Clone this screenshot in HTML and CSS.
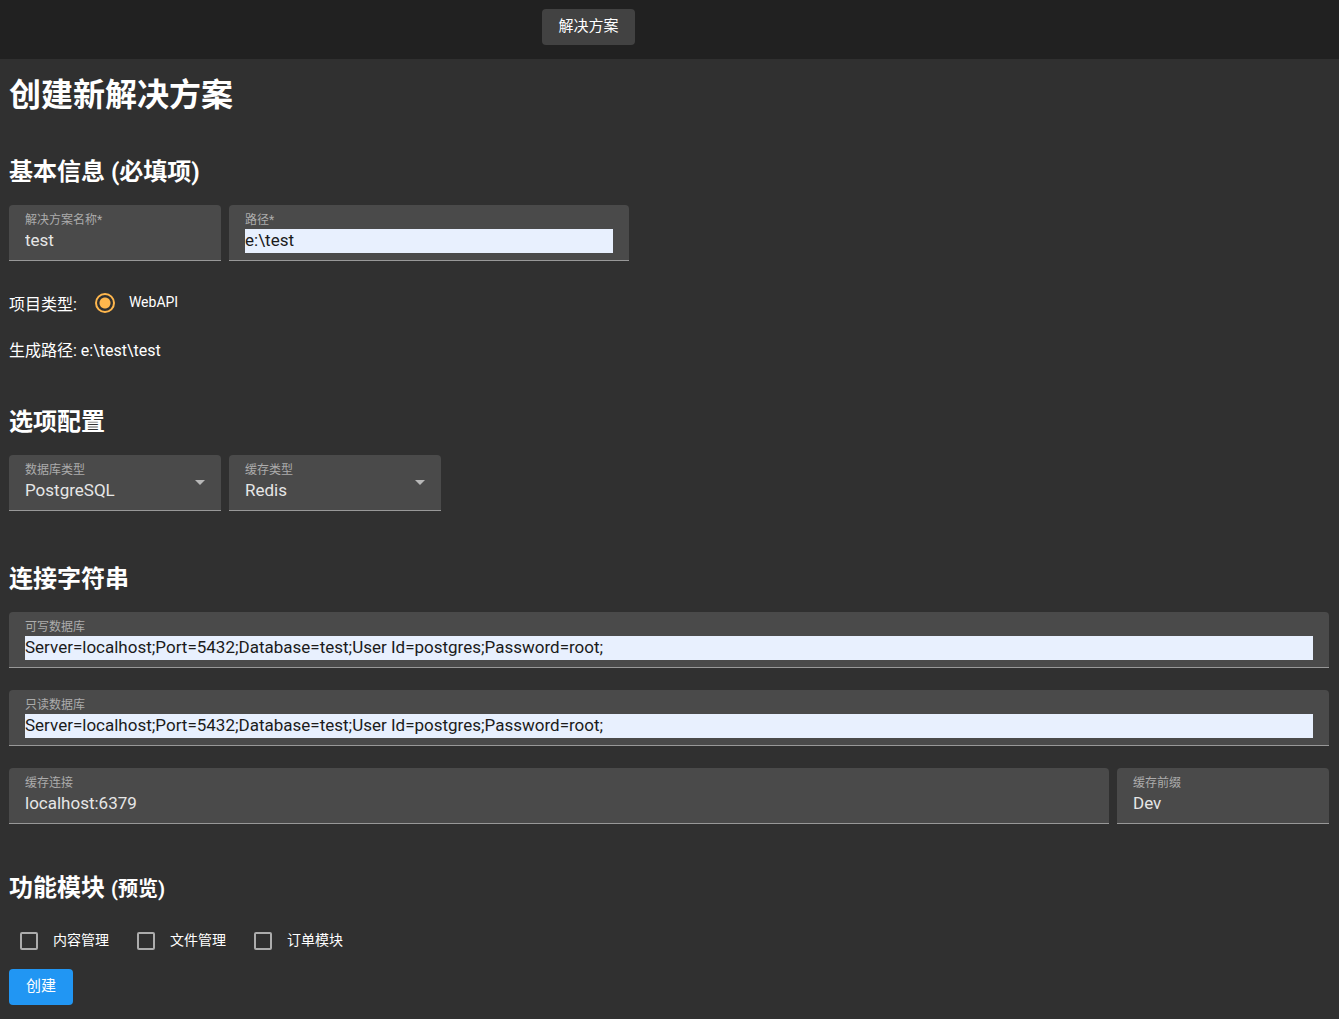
FILE: index.html
```html
<!DOCTYPE html>
<html lang="zh-CN">
<head>
<meta charset="utf-8">
<meta name="viewport" content="width=device-width, initial-scale=1">
<title>创建新解决方案</title>
<link rel="stylesheet" href="styles.css">
</head>
<body>
<header class="toolbar">
  <button type="button" class="btn btn-nav">解决方案</button>
</header>
<main class="page">
  <form class="form">
    <h1 class="title">创建新解决方案</h1>

    <section class="section section-basic">
      <h2 class="heading">基本信息 (必填项)</h2>
      <div class="row">
        <div class="field field-small">
          <label class="field-label" for="name">解决方案名称*</label>
          <input class="field-input" id="name" type="text" value="test">
        </div>
        <div class="field field-medium">
          <label class="field-label" for="path">路径*</label>
          <input class="field-input autofilled" id="path" type="text" value="e:\test">
        </div>
      </div>
      <div class="types" role="radiogroup" aria-labelledby="type-label">
        <span class="types-label" id="type-label">项目类型:</span>
        <input class="radio" id="webapi" type="radio" name="type" checked>
        <label class="option-label" for="webapi">WebAPI</label>
      </div>
      <p class="output">生成路径: e:\test\test</p>
    </section>

    <section class="section section-options">
      <h2 class="heading">选项配置</h2>
      <div class="row">
        <div class="field field-small field-select">
          <label class="field-label" for="database">数据库类型</label>
          <select class="field-input" id="database"><option>PostgreSQL</option></select>
          <svg class="arrow" viewBox="0 0 10 5" aria-hidden="true"><path d="M0 0h10L5 5z"/></svg>
        </div>
        <div class="field field-small field-select">
          <label class="field-label" for="cache">缓存类型</label>
          <select class="field-input" id="cache"><option>Redis</option></select>
          <svg class="arrow" viewBox="0 0 10 5" aria-hidden="true"><path d="M0 0h10L5 5z"/></svg>
        </div>
      </div>
    </section>

    <section class="section section-connections">
      <h2 class="heading">连接字符串</h2>
      <div class="stack">
        <div class="field">
          <label class="field-label" for="write-db">可写数据库</label>
          <input class="field-input autofilled" id="write-db" type="text" value="Server=localhost;Port=5432;Database=test;User Id=postgres;Password=root;">
        </div>
        <div class="field">
          <label class="field-label" for="read-db">只读数据库</label>
          <input class="field-input autofilled" id="read-db" type="text" value="Server=localhost;Port=5432;Database=test;User Id=postgres;Password=root;">
        </div>
        <div class="row">
          <div class="field field-grow">
            <label class="field-label" for="cache-url">缓存连接</label>
            <input class="field-input" id="cache-url" type="text" value="localhost:6379">
          </div>
          <div class="field field-small">
            <label class="field-label" for="cache-prefix">缓存前缀</label>
            <input class="field-input" id="cache-prefix" type="text" value="Dev">
          </div>
        </div>
      </div>
    </section>

    <section class="section">
      <h2 class="heading">功能模块 <small class="note">(预览)</small></h2>
      <div class="modules">
        <label class="module"><input class="checkbox" type="checkbox"><span class="module-name">内容管理</span></label>
        <label class="module"><input class="checkbox" type="checkbox"><span class="module-name">文件管理</span></label>
        <label class="module"><input class="checkbox" type="checkbox"><span class="module-name">订单模块</span></label>
      </div>
    </section>

    <button type="button" class="btn btn-primary">创建</button>
  </form>
</main>
</body>
</html>
```

FILE: styles.css
```css
* {
  box-sizing: border-box;
}

body {
  margin: 0;
  background: #303030;
  color: #fff;
  font-family: Roboto, "Noto Sans CJK SC", sans-serif;
  font-size: 16px;
  line-height: 24px;
}

.toolbar {
  display: flex;
  justify-content: center;
  padding: 9px 162px 14px 0;
  background: #212121;
}

.btn {
  display: block;
  min-width: 64px;
  height: 36px;
  padding: 0 16px 2px;
  border: 0;
  border-radius: 4px;
  color: #fff;
  font-family: inherit;
  font-size: 15px;
  line-height: 34px;
  cursor: pointer;
}

.btn-nav {
  background: #424242;
}

.btn-primary {
  background: #2196f3;
}

.page {
  padding: 16px 10px 14px 9px;
}

.title {
  margin: 0 0 41px;
  font-size: 32px;
  line-height: 40px;
}

.section {
  margin-bottom: 8px;
}

.section-basic {
  margin-bottom: 43px;
}

.section-options {
  margin-bottom: 52px;
}

.section-connections {
  margin-bottom: 48px;
}

.heading {
  margin: 0 0 17px;
  font-size: 24px;
  line-height: 32px;
}

.note {
  font-size: 20px;
  line-height: 24px;
}

.row {
  display: flex;
  gap: 8px;
}

.stack {
  display: flex;
  flex-direction: column;
  gap: 22px;
}

.field {
  display: flex;
  flex-direction: column;
  padding: 6px 16px 7px;
  border-bottom: 1px solid #989898;
  border-radius: 4px 4px 0 0;
  background: #4a4a4a;
}

.field-small {
  flex: 0 1 212px;
}

.field-medium {
  flex: 0 1 400px;
}

.field-grow {
  flex: 1;
}

.field-label {
  color: #acacac;
  font-size: 12px;
  line-height: 18px;
}

.field-input {
  appearance: none;
  width: 100%;
  height: 24px;
  padding: 0 0 2px;
  border: 0;
  border-radius: 0;
  outline: 0;
  background: transparent;
  color: #e6e6e6;
  font-family: inherit;
  font-size: 17px;
}

.autofilled {
  background: #e8f0fe;
  color: #1b1b1b;
}

.field-select {
  display: grid;
  grid-template-columns: 1fr 10px;
  align-items: center;
}

.field-select .field-input {
  grid-area: 2 / 1 / 3 / 3;
}

.arrow {
  grid-area: 1 / 2 / 3 / 3;
  width: 10px;
  height: 5px;
  fill: #b7b7b7;
  pointer-events: none;
}

.types {
  display: flex;
  align-items: center;
  height: 40px;
  margin-top: 22px;
}

.types-label {
  padding-top: 3px;
}

.radio {
  appearance: none;
  width: 20px;
  height: 20px;
  margin: 0 14px 0 18px;
  border: 2px solid #ffb74d;
  border-radius: 50%;
  background: radial-gradient(circle, #ffb74d 5px, transparent 6px);
}

.option-label {
  padding-bottom: 2px;
  font-size: 14px;
}

.output {
  margin: 16px 0 0;
}

.modules {
  display: flex;
  gap: 17px;
}

.module {
  display: flex;
  align-items: center;
  height: 40px;
  padding-left: 11px;
  font-size: 14px;
}

.module-name {
  padding-bottom: 2px;
}

.checkbox {
  appearance: none;
  width: 18px;
  height: 18px;
  margin: 0 15px 0 0;
  border: 2px solid #acacac;
  border-radius: 2px;
}
```
